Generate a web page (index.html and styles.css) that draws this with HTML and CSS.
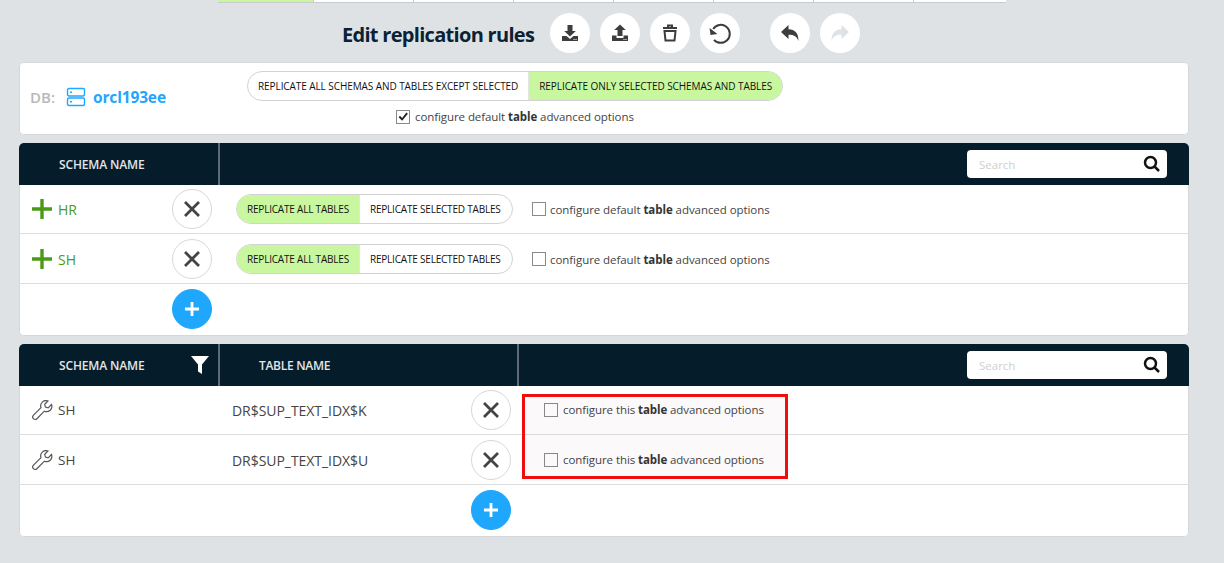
FILE: index.html
```html
<!DOCTYPE html>
<html lang="en">
<head>
<meta charset="utf-8">
<title>Edit replication rules</title>
<link rel="stylesheet" href="styles.css">
</head>
<body>
<div class="page">
  <div class="tabs"><i class="tab tab-on"></i><i class="tab"></i><i class="tab"></i><i class="tab"></i><i class="tab"></i><i class="tab"></i><i class="tab"></i><i class="tab tab-last"></i></div>
  <div class="toolbar">
    <h1 class="title">Edit replication rules</h1>
    <div class="tools">
      <button class="tool"><svg width="20" height="20" viewBox="0 0 20 20"><path class="ink" d="M7.500 2h5v6h3.300L10 13.600 4.200 8h3.300zM2 13h4.500l3.500 3 3.500-3H18v5H2z"/><path class="dots" d="M13.500 16h1v1h-1zM15.500 16h1v1h-1z"/></svg></button>
      <button class="tool"><svg width="20" height="20" viewBox="0 0 20 20"><path class="ink" d="M7.500 13V7H4.200L10 1.400 15.800 7h-3.300v6zM2 12.500h4.500V15h7v-2.500H18V18H2z"/><path class="dots" d="M13.500 16h1v1h-1zM15.500 16h1v1h-1z"/></svg></button>
      <button class="tool"><svg width="20" height="20" viewBox="0 0 20 20"><path class="line" d="M3 5h14M8 5V2.500h4V5M4.500 8h11l-1 9.500h-9z"/></svg></button>
      <button class="tool"><svg width="24" height="24" viewBox="0 0 24 24"><path class="line" d="M5.200 8A9 9 0 1 1 6 18.800"/><path class="ink" d="M2 6.500l7 7H2z" transform="rotate(-8 5 10)"/></svg></button>
      <button class="tool tool-far"><svg width="22" height="22" viewBox="0 0 22 22"><path class="ink" d="M9.500 3v4.200c6.500.2 10 3.800 10 11.800-1.500-4.500-4.500-6.300-10-6.300V17L2 10z"/></svg></button>
      <button class="tool tool-off"><svg width="22" height="22" viewBox="0 0 22 22"><path class="ink-off" d="M12.500 3v4.200C6 7.400 2.500 11 2.500 19c1.500-4.500 4.500-6.300 10-6.300V17L20 10z"/></svg></button>
    </div>
  </div>

  <section class="card db-card">
    <div class="db"><span class="db-label">DB:</span>
      <svg class="db-icon" width="20" height="20" viewBox="0 0 20 20"><rect class="db-line" x="1.500" y="1.500" width="17" height="7.500" rx="1.500"/><rect class="db-line" x="1.500" y="11" width="17" height="7.500" rx="1.500"/><path class="db-line" d="M4 5.200h2M4 14.700h2"/></svg>
      <span class="db-name">orcl193ee</span></div>
    <div class="db-options">
      <div class="seg seg-lg"><span class="seg-item">REPLICATE ALL SCHEMAS AND TABLES EXCEPT SELECTED</span><span class="seg-item seg-on">REPLICATE ONLY SELECTED SCHEMAS AND TABLES</span></div>
      <label class="check check-center"><span class="box box-on"><svg width="13" height="13" viewBox="0 0 13 13"><path class="tick" d="M2.500 6.500l3 3.200L11 2.800"/></svg></span><span>configure default <b>table</b> advanced options</span></label>
    </div>
  </section>

  <section class="card table">
    <header class="thead">
      <div class="th th-schema"><span>SCHEMA NAME</span></div>
      <div class="th th-fill"><div class="search"><span class="search-text">Search</span><svg width="18" height="18" viewBox="0 0 18 18"><circle class="search-line" cx="7.500" cy="7.500" r="5.500"/><path class="search-line" d="M11.500 11.500L16 16"/></svg></div></div>
    </header>
    <div class="row">
      <div class="schema schema-green"><svg class="plus" width="20" height="20" viewBox="0 0 20 20"><path d="M8.300 0h3.400v8.300H20v3.400h-8.300V20H8.300v-8.300H0V8.300h8.300z"/></svg><span>HR</span></div>
      <button class="round"><svg width="18" height="18" viewBox="0 0 18 18"><path class="x" d="M2 2l14 14M16 2L2 16"/></svg></button>
      <div class="seg seg-sm"><span class="seg-item seg-on">REPLICATE ALL TABLES</span><span class="seg-item">REPLICATE SELECTED TABLES</span></div>
      <label class="check"><span class="box"></span><span>configure default <b>table</b> advanced options</span></label>
    </div>
    <div class="row">
      <div class="schema schema-green"><svg class="plus" width="20" height="20" viewBox="0 0 20 20"><path d="M8.300 0h3.400v8.300H20v3.400h-8.300V20H8.300v-8.300H0V8.300h8.300z"/></svg><span>SH</span></div>
      <button class="round"><svg width="18" height="18" viewBox="0 0 18 18"><path class="x" d="M2 2l14 14M16 2L2 16"/></svg></button>
      <div class="seg seg-sm"><span class="seg-item seg-on">REPLICATE ALL TABLES</span><span class="seg-item">REPLICATE SELECTED TABLES</span></div>
      <label class="check"><span class="box"></span><span>configure default <b>table</b> advanced options</span></label>
    </div>
    <div class="row row-add">
      <button class="round round-add"><svg width="18" height="18" viewBox="0 0 18 18"><path class="add" d="M9 2v14M2 9h14"/></svg></button>
    </div>
  </section>

  <section class="card table table-b">
    <header class="thead">
      <div class="th th-schema"><span>SCHEMA NAME</span><svg class="funnel" width="20" height="20" viewBox="0 0 20 20"><path d="M1 1h18l-7 8.500V19l-4-2.500v-7z"/></svg></div>
      <div class="th th-table"><span>TABLE NAME</span></div>
      <div class="th th-fill"><div class="search"><span class="search-text">Search</span><svg width="18" height="18" viewBox="0 0 18 18"><circle class="search-line" cx="7.500" cy="7.500" r="5.500"/><path class="search-line" d="M11.500 11.500L16 16"/></svg></div></div>
    </header>
    <div class="row">
      <div class="schema schema-tool"><svg class="wrench" width="21" height="21" viewBox="0 0 21 21"><path d="M19.500 4.500l-3.300 3.300-2.800-.7-.7-2.800L16 1a5.300 5.300 0 0 0-7 6.700L1.500 15.200a2.400 2.400 0 0 0 3.400 3.500L12.400 11.200a5.300 5.300 0 0 0 7.100-6.700z"/></svg><span>SH</span></div>
      <div class="tname">DR$SUP_TEXT_IDX$K</div>
      <button class="round"><svg width="18" height="18" viewBox="0 0 18 18"><path class="x" d="M2 2l14 14M16 2L2 16"/></svg></button>
      <label class="check check-this"><span class="box"></span><span class="check-text">configure this <b>table</b> advanced options</span></label>
    </div>
    <div class="row">
      <div class="schema schema-tool"><svg class="wrench" width="21" height="21" viewBox="0 0 21 21"><path d="M19.500 4.500l-3.300 3.300-2.800-.7-.7-2.800L16 1a5.300 5.300 0 0 0-7 6.700L1.500 15.200a2.400 2.400 0 0 0 3.400 3.500L12.400 11.200a5.300 5.300 0 0 0 7.100-6.700z"/></svg><span>SH</span></div>
      <div class="tname">DR$SUP_TEXT_IDX$U</div>
      <button class="round"><svg width="18" height="18" viewBox="0 0 18 18"><path class="x" d="M2 2l14 14M16 2L2 16"/></svg></button>
      <label class="check check-this"><span class="box"></span><span class="check-text">configure this <b>table</b> advanced options</span></label>
    </div>
    <div class="row row-add row-add-b">
      <button class="round round-add"><svg width="18" height="18" viewBox="0 0 18 18"><path class="add" d="M9 2v14M2 9h14"/></svg></button>
    </div>
    <div class="highlight"></div>
  </section>
</div>
</body>
</html>
```
FILE: styles.css
```css
* { box-sizing: border-box; }
html, body { margin: 0; height: 100%; }
body {
  background: #dfe2e5;
  font-family: "Open Sans", "Noto Sans", sans-serif;
  color: #333;
  overflow: hidden;
}
.page { width: 1224px; height: 563px; padding: 0 35px 0 19px; }

/* top tab strip */
.tabs { display: flex; height: 2px; margin-left: 199px; width: 788px; box-shadow: 0 1px 0 #c9cccf; }
.tab { flex: 0 0 100px; background: #fff; border-right: 1px solid #ccc; display: block; }
.tab-on { flex-basis: 96px; background: #c8f7a0; }
.tab-last { flex: 1; border-right: 0; }

/* toolbar */
.toolbar { display: flex; align-items: center; height: 60px; padding: 2px 0 0 323px; }
.title { margin: 2px 0 0; font-size: 20px; font-weight: 700; color: #0a2233; width: 208px; white-space: nowrap; letter-spacing: -0.7px; }
.tools { display: flex; gap: 10px; }
.tool { width: 40px; height: 40px; border: 0; border-radius: 50%; background: #fff; padding: 0; display: flex; align-items: center; justify-content: center; }
.tool-far { margin-left: 20px; }
.ink { fill: #3d3d3d; }
.ink-off { fill: #dfe2e5; }
.dots { fill: #fff; }
.line { fill: none; stroke: #3d3d3d; stroke-width: 2; }

/* cards */
.card { background: #fff; border-radius: 5px; box-shadow: inset 0 0 0 1px #d5d8db; }
.db-card { display: flex; height: 73px; margin-bottom: 8px; }
.db { display: flex; align-items: center; width: 228px; padding: 0 0 0 11px; height: 69px; }
.db-label { font-size: 15px; font-weight: 600; color: #b9b9b9; width: 36px; }
.db-icon { margin-right: 7px; }
.db-line { fill: none; stroke: #1ea7fd; stroke-width: 1.400; }
.db-name { font-size: 15.500px; font-weight: 700; color: #1ea7fd; letter-spacing: -0.15px; }
.db-options { display: flex; flex-direction: column; padding-top: 9px; }

/* segmented */
.seg { display: inline-flex; border: 1px solid #d2d2d2; border-radius: 15px; overflow: hidden; color: #111; font-size: 10px; letter-spacing: -0.08px; background: #fff; white-space: nowrap; }
.seg-lg { height: 30px; }
.seg-sm { height: 30px; margin-left: 24px; width: 277px; letter-spacing: -0.2px; }
.seg-item { display: flex; align-items: center; padding: 0 10px; border-right: 1px solid #e4e4e4; }
.seg-item:last-child { border-right: 0; }
.seg-on { background: #c8f7a0; }

/* checks */
.check { display: inline-flex; align-items: center; gap: 5px; font-size: 11.500px; color: #444; white-space: nowrap; letter-spacing: -0.08px; }
.check b { font-weight: 700; color: #333; }
.box { width: 14px; height: 14px; border: 1px solid #8a8a8a; background: #fff; display: flex; align-items: center; justify-content: center; }
.tick { fill: none; stroke: #222; stroke-width: 2; }
.check-center { margin: 8px 0 0 149px; }
.check-this { margin-left: 33px; }
.check-text { padding-bottom: 2px; }

/* tables */
.table { position: relative; margin-bottom: 8px; }
.thead { display: flex; height: 42px; background: #051c2b; border-radius: 5px 5px 0 0; color: #e2e6e8; font-size: 12px; font-weight: 600; letter-spacing: -0.15px; }
.th { display: flex; align-items: center; }
.th-schema { width: 201px; padding-left: 40px; justify-content: space-between; padding-right: 8px; border-right: 2px solid #5d6c76; }
.th-table { width: 299px; padding-left: 39px; border-right: 2px solid #5d6c76; letter-spacing: -0.3px; }
.th-fill { flex: 1; justify-content: flex-end; padding-right: 22px; }
.funnel { fill: #fff; }
.search { width: 200px; height: 28px; background: #fff; border-radius: 4px; display: flex; align-items: center; justify-content: space-between; padding: 0 6px 0 12px; }
.search-text { color: #cfcfcf; font-size: 11.500px; font-weight: 400; letter-spacing: 0; }
.search-line { fill: none; stroke: #111; stroke-width: 2.500; }

.row { display: flex; align-items: center; height: 50px; border-bottom: 1px solid #dedede; }
.thead + .row { height: 49px; }
.row + .row { padding-top: 1px; }
.row.row-add { height: 52px; border-bottom: 0; padding: 5px 0 0 153px; align-items: flex-start; }
.row.row-add-b { padding-left: 452px; }
.schema { width: 153px; display: flex; align-items: center; padding-left: 13px; font-size: 13.500px; gap: 5px; }
.schema-green { color: #4b9a16; font-size: 14px; gap: 6px; }
.schema-tool { width: 213px; color: #444; }
.plus { fill: #4b9a16; }
.wrench { fill: none; stroke: #555; stroke-width: 1.200; }
.tname { width: 239px; font-size: 14px; color: #444; letter-spacing: -0.05px; }
.round { width: 40px; height: 40px; flex: none; border-radius: 50%; border: 1px solid #d8d8d8; background: #fff; padding: 0; display: flex; align-items: center; justify-content: center; }
.round-add { background: #1ea7fd; border-color: #1ea7fd; }
.x { fill: none; stroke: #444; stroke-width: 2.800; }
.add { fill: none; stroke: #fff; stroke-width: 2.800; }
.seg-sm + .check { margin-left: 19px; gap: 4px; letter-spacing: -0.06px; }

/* red annotation over the rows */
.highlight { position: absolute; left: 503px; top: 50px; width: 266px; height: 85px; border: 3px solid #f00d0d; background: rgba(120, 60, 90, 0.03); pointer-events: none; }
```
